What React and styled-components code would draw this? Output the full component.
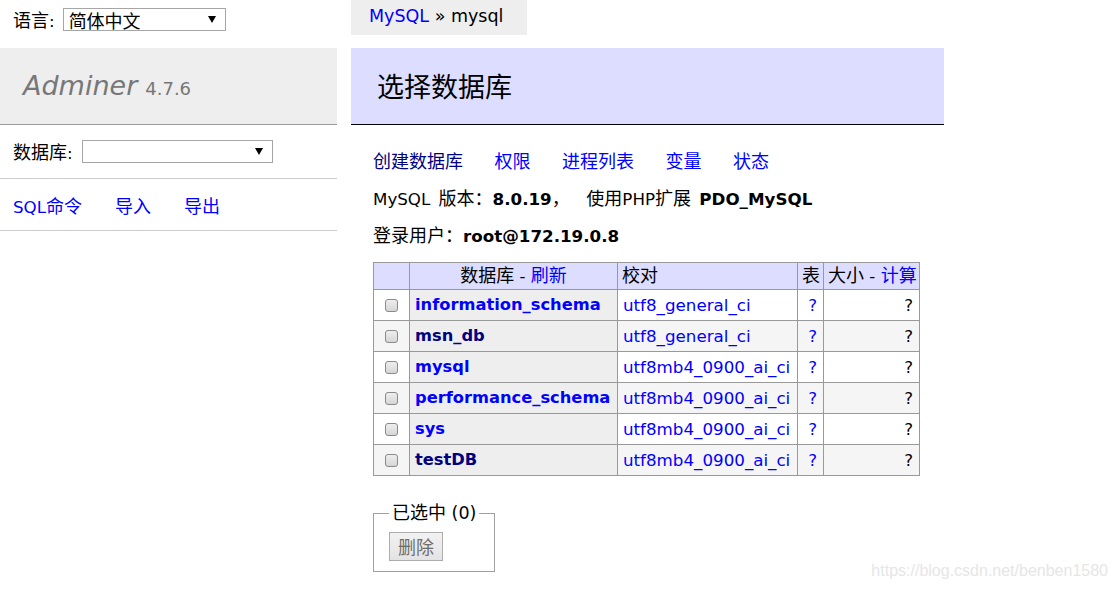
import React from 'react';
import styled, { createGlobalStyle } from 'styled-components';

const GlobalStyle = createGlobalStyle`
  html, body {
    margin: 0;
    padding: 0;
    background: #fff;
  }

  body {
    font-family: "DejaVu Sans", "Noto Sans CJK SC", sans-serif;
    font-size: 16.7px;
    line-height: 22px;
    color: #000;
    overflow: hidden;
  }
`;

const Page = styled.div`
  position: relative;
  display: flex;
  align-items: flex-start;
  height: 589px;
`;

// CJK runs are rendered a little larger than the latin text, as in the original;
// line-height 0 keeps them from stretching the line box
const Zh = styled.span`
  font-family: "Noto Sans CJK SC", sans-serif;
  font-size: 18px;
  line-height: 0;
`;

const Link = styled.a`
  color: ${(p) => (p.$visited ? 'navy' : '#00f')};
  text-decoration: none;
  font-weight: ${(p) => (p.$bold ? 'bold' : 'normal')};
`;

const Sidebar = styled.aside`
  flex: none;
  width: 337px;
`;

const FieldBar = styled.div`
  box-sizing: border-box;
  height: ${(p) => p.$height}px;
  padding: ${(p) => p.$top}px 0 0 13px;
  display: flex;
  align-items: flex-start;
  gap: ${(p) => p.$gap}px;
  line-height: 23px;
  border-bottom: ${(p) => (p.$line ? '1px solid #ccc' : 'none')};
`;

const Label = styled.span`
  padding-top: 2px;
`;

const Select = styled.div`
  box-sizing: border-box;
  width: ${(p) => p.$width}px;
  height: 23px;
  padding: 0 9px 0 5px;
  border: 1px solid #a6a6a6;
  background: #fff;
  display: flex;
  align-items: center;
  justify-content: space-between;
  line-height: 21px;

  &::after {
    content: '';
    margin-left: auto;
    border-left: 4px solid transparent;
    border-right: 4px solid transparent;
    border-top: 7px solid #000;
  }
`;

const Logo = styled.h1`
  margin: 0;
  height: 76px;
  padding-left: 23px;
  line-height: 76px;
  background: #eee;
  border-bottom: 1px solid #999;
  font-size: 27px;
  font-weight: normal;
  font-style: italic;
  color: #777;
`;

const Version = styled.span`
  margin-left: 8px;
  font-size: 18px;
  font-style: normal;
`;

const SideLinks = styled.nav`
  box-sizing: border-box;
  height: 52px;
  padding: 5px 0 0 13px;
  display: flex;
  align-items: center;
  gap: 33px;
  border-bottom: 1px solid #ccc;
`;

const Content = styled.main`
  flex: none;
  width: 593px;
  margin-left: 14px;
  display: flex;
  flex-direction: column;
  align-items: flex-start;
`;

const Breadcrumb = styled.div`
  box-sizing: border-box;
  width: 176px;
  height: 35px;
  padding: 0 18px;
  line-height: 33px;
  font-size: 17.5px;
  background: #eee;
  white-space: nowrap;
`;

const Title = styled.h2`
  align-self: stretch;
  margin: 13px 0 0;
  height: 76px;
  padding-left: 26px;
  line-height: 76px;
  background: #ddf;
  border-bottom: 1px solid #000;
  font-family: "Noto Sans CJK SC", sans-serif;
  font-size: 27px;
  font-weight: normal;
`;

const Actions = styled.nav`
  margin: 26px 0 0 22px;
  display: flex;
  gap: 31.5px;
`;

const Info = styled.p`
  margin: 15px 0 0 22px;
  height: 22px;
  white-space: pre;
  word-spacing: 3px;
`;

const Table = styled.table`
  margin: 15px 0 0 22px;
  width: 547px;
  table-layout: fixed;
  border-collapse: collapse;
`;

const HeadCell = styled.th`
  height: 20px;
  padding: 3px 4px;
  border: 1px solid #999;
  background: #ddf;
  font-weight: normal;
  line-height: 20px;
  text-align: ${(p) => p.$align || 'left'};
  white-space: nowrap;
`;

const Row = styled.tr`
  background: ${(p) => (p.$odd ? '#f5f5f5' : '#fff')};
`;

const NameCell = styled.th`
  padding: 3px 5px;
  border: 1px solid #999;
  background: #eee;
  font-size: 16.3px;
  line-height: 24px;
  text-align: left;
  white-space: nowrap;
`;

const Cell = styled.td`
  padding: 3px ${(p) => (p.$right ? '6px' : '5px')};
  border: 1px solid #999;
  line-height: 24px;
  text-align: ${(p) => (p.$right ? 'right' : p.$center ? 'center' : 'left')};
  color: ${(p) => p.$color || '#000'};
  white-space: nowrap;
`;

const Check = styled.input`
  appearance: none;
  display: block;
  box-sizing: border-box;
  width: 13px;
  height: 13px;
  margin: 0 auto;
  border: 1px solid #8a8a8a;
  border-radius: 3px;
  background: linear-gradient(#eeeeee, #d6d6d6);
`;

const Selected = styled.fieldset`
  margin: 26px 0 0 22px;
  padding: 0 15px 10px;
  border: 1px solid #a0a0a0;
`;

const Legend = styled.legend`
  padding: 0 3px;
  line-height: 22px;
  font-size: 17.5px;
`;

const Button = styled.button`
  margin-top: 8px;
  height: 29px;
  padding: 0 8px;
  border: 1px solid #adadad;
  background: linear-gradient(#f2f2f2, #e3e3e3);
  color: #6d6d6d;
  font-family: "Noto Sans CJK SC", sans-serif;
  font-size: 18px;
  line-height: 27px;
`;

const Watermark = styled.div`
  position: absolute;
  right: 9px;
  bottom: 8px;
  font-family: "Liberation Sans", Arial, sans-serif;
  font-size: 16px;
  line-height: 20px;
  color: #e6e6e6;
`;

const databases = [
  { name: 'information_schema', collation: 'utf8_general_ci' },
  { name: 'msn_db', collation: 'utf8_general_ci', visited: true },
  { name: 'mysql', collation: 'utf8mb4_0900_ai_ci' },
  { name: 'performance_schema', collation: 'utf8mb4_0900_ai_ci' },
  { name: 'sys', collation: 'utf8mb4_0900_ai_ci' },
  { name: 'testDB', collation: 'utf8mb4_0900_ai_ci', visited: true },
];

export default function App() {
  return (
    <Page>
      <GlobalStyle />
      <Sidebar>
        <FieldBar $height={48} $top={8} $gap={8}>
          <Label><Zh>语言</Zh>:</Label>
          <Select $width={163}><Zh>简体中文</Zh></Select>
        </FieldBar>
        <Logo>
          Adminer<Version>4.7.6</Version>
        </Logo>
        <FieldBar $height={54} $top={15} $gap={9} $line>
          <Label><Zh>数据库</Zh>:</Label>
          <Select $width={191} />
        </FieldBar>
        <SideLinks>
          <Link href="#">SQL<Zh>命令</Zh></Link>
          <Link href="#"><Zh>导入</Zh></Link>
          <Link href="#"><Zh>导出</Zh></Link>
        </SideLinks>
      </Sidebar>

      <Content>
        <Breadcrumb>
          <Link href="#">MySQL</Link> » mysql
        </Breadcrumb>
        <Title>选择数据库</Title>

        <Actions>
          <Link href="#" $visited><Zh>创建数据库</Zh></Link>
          <Link href="#"><Zh>权限</Zh></Link>
          <Link href="#"><Zh>进程列表</Zh></Link>
          <Link href="#"><Zh>变量</Zh></Link>
          <Link href="#"><Zh>状态</Zh></Link>
        </Actions>
        <Info>
          MySQL <Zh>版本：</Zh><b>8.0.19</b><Zh>，</Zh>  <Zh>使用</Zh>PHP<Zh>扩展</Zh> <b>PDO_MySQL</b>
        </Info>
        <Info>
          <Zh>登录用户：</Zh><b>root@172.19.0.8</b>
        </Info>

        <Table>
          <colgroup>
            <col style={{ width: 36 }} />
            <col style={{ width: 208 }} />
            <col style={{ width: 180 }} />
            <col style={{ width: 26 }} />
            <col style={{ width: 96 }} />
          </colgroup>
          <thead>
            <tr>
              <HeadCell />
              <HeadCell $align="center">
                <Zh>数据库</Zh> - <Link href="#"><Zh>刷新</Zh></Link>
              </HeadCell>
              <HeadCell><Zh>校对</Zh></HeadCell>
              <HeadCell><Zh>表</Zh></HeadCell>
              <HeadCell>
                <Zh>大小</Zh> - <Link href="#"><Zh>计算</Zh></Link>
              </HeadCell>
            </tr>
          </thead>
          <tbody>
            {databases.map((db, i) => (
              <Row key={db.name} $odd={i % 2 === 1}>
                <Cell $center>
                  <Check type="checkbox" readOnly />
                </Cell>
                <NameCell>
                  <Link href="#" $bold $visited={db.visited}>{db.name}</Link>
                </NameCell>
                <Cell $color="#00f">{db.collation}</Cell>
                <Cell $right $color="#00f">?</Cell>
                <Cell $right>?</Cell>
              </Row>
            ))}
          </tbody>
        </Table>

        <Selected>
          <Legend><Zh>已选中</Zh> (0)</Legend>
          <Button disabled>删除</Button>
        </Selected>
      </Content>

      <Watermark>https://blog.csdn.net/benben1580</Watermark>
    </Page>
  );
}
